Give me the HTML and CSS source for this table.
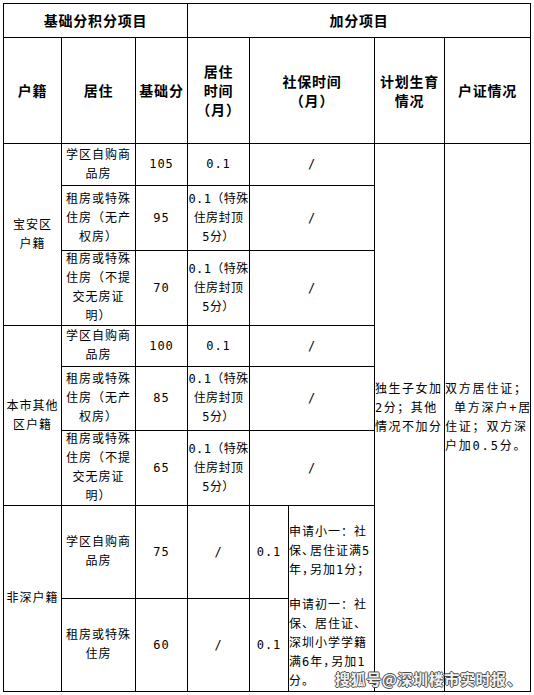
FILE: index.html
```html
<!DOCTYPE html>
<html lang="zh-CN">
<head>
<meta charset="utf-8">
<title>积分项目</title>
<link rel="stylesheet" href="styles.css">
</head>
<body>
<div class="page">
  <div class="sheet">
    <div class="cell head cs3"><span>基础分积分项目</span></div>
    <div class="cell head cs5"><span>加分项目</span></div>

    <div class="cell head"><span>户籍</span></div>
    <div class="cell head"><span>居住</span></div>
    <div class="cell head"><span>基础分</span></div>
    <div class="cell head"><span>居住<br>时间<br>（月）</span></div>
    <div class="cell head cs2"><span>社保时间<br>（月）</span></div>
    <div class="cell head"><span>计划生育<br>情况</span></div>
    <div class="cell head"><span>户证情况</span></div>

    <div class="cell rs3"><span>宝安区<br>户籍</span></div>
    <div class="cell"><span>学区自购商<br>品房</span></div>
    <div class="cell"><span>105</span></div>
    <div class="cell"><span>0.1</span></div>
    <div class="cell cs2"><span>/</span></div>
    <div class="cell rs8 plan"><span>独生子女加<br>2分；其他<br>情况不加分</span></div>
    <div class="cell rs8 hukou"><span>双方居住证；<br>&nbsp;单方深户+居<br>住证；双方深<br>户加0.5分。</span></div>

    <div class="cell"><span>租房或特殊<br>住房（无产<br>权房）</span></div>
    <div class="cell"><span>95</span></div>
    <div class="cell nar"><span>0.1（特殊<br>住房封顶<br>5分）</span></div>
    <div class="cell cs2"><span>/</span></div>

    <div class="cell"><span>租房或特殊<br>住房（不提<br>交无房证<br>明）</span></div>
    <div class="cell"><span>70</span></div>
    <div class="cell nar"><span>0.1（特殊<br>住房封顶<br>5分）</span></div>
    <div class="cell cs2"><span>/</span></div>

    <div class="cell rs3"><span>本市其他<br>区户籍</span></div>
    <div class="cell"><span>学区自购商<br>品房</span></div>
    <div class="cell"><span>100</span></div>
    <div class="cell"><span>0.1</span></div>
    <div class="cell cs2"><span>/</span></div>

    <div class="cell"><span>租房或特殊<br>住房（无产<br>权房）</span></div>
    <div class="cell"><span>85</span></div>
    <div class="cell nar"><span>0.1（特殊<br>住房封顶<br>5分）</span></div>
    <div class="cell cs2"><span>/</span></div>

    <div class="cell"><span>租房或特殊<br>住房（不提<br>交无房证<br>明）</span></div>
    <div class="cell"><span>65</span></div>
    <div class="cell nar"><span>0.1（特殊<br>住房封顶<br>5分）</span></div>
    <div class="cell cs2"><span>/</span></div>

    <div class="cell rs2"><span>非深户籍</span></div>
    <div class="cell"><span>学区自购商<br>品房</span></div>
    <div class="cell"><span>75</span></div>
    <div class="cell"><span>/</span></div>
    <div class="cell"><span>0.1</span></div>
    <div class="cell rs2 apply">
      <div class="para"><span>申请小一：社<br>保<span class="tight">、</span>居住证满5<br>年<span class="tight">，</span>另加1分；</span></div>
      <div class="para"><span>申请初一：社<br>保、居住证、<br>深圳小学学籍<br>满6年<span class="tight">，</span>另加1<br>分。</span></div>
    </div>

    <div class="cell"><span>租房或特殊<br>住房</span></div>
    <div class="cell"><span>60</span></div>
    <div class="cell"><span>/</span></div>
    <div class="cell"><span>0.1</span></div>
  </div>
  <div class="watermark">搜狐号@深圳楼市实时报、</div>
</div>
</body>
</html>
```

FILE: styles.css
```css
html, body {
  margin: 0;
  padding: 0;
  background: #ffffff;
}

body {
  padding: 3px 0 0 3px;
  font-family: "DejaVu Sans Mono", "Noto Sans CJK SC", sans-serif;
  font-size: 12px;
  color: #000000;
}

.page {
  position: relative;
  width: max-content;
}

.sheet {
  display: grid;
  grid-template-columns: 57px 73px 51px 61px 38px 85px 69px 85px;
  grid-template-rows: 33px 105px 41px 64px 74px 40px 63px 74px 92px 92px;
  gap: 1px;
  padding: 1px;
  background: #000000;
}

.cell {
  background: #ffffff;
  display: flex;
  align-items: center;
  justify-content: center;
  text-align: center;
  line-height: 19px;
  letter-spacing: 1px;
  white-space: nowrap;
}

.cell > span {
  display: block;
}

.head {
  font-family: "Noto Sans CJK SC", sans-serif;
  font-weight: bold;
  font-size: 14px;
  line-height: 19px;
  letter-spacing: 0.8px;
}

.nar {
  letter-spacing: 0.4px;
}

.cs2 { grid-column: span 2; }
.cs3 { grid-column: span 3; }
.cs5 { grid-column: span 5; }
.rs2 { grid-row: span 2; }
.rs3 { grid-row: span 3; }
.rs8 { grid-row: span 8; }

.plan {
  justify-content: flex-start;
  text-align: left;
  letter-spacing: 1.5px;
  padding-bottom: 19px;
}

.hukou {
  justify-content: flex-start;
  text-align: left;
  letter-spacing: 1.8px;
}

.apply {
  flex-direction: column;
  align-items: stretch;
  justify-content: stretch;
  text-align: left;
}

.para {
  flex: 1;
  display: flex;
  align-items: center;
}

.para > span {
  display: block;
}

.tight {
  letter-spacing: -4px;
}

.watermark {
  position: absolute;
  left: 332px;
  top: 667px;
  font-family: "Noto Sans CJK SC", sans-serif;
  font-weight: bold;
  font-size: 15px;
  line-height: 18px;
  color: #f2f2f2;
  letter-spacing: 0.6px;
  white-space: nowrap;
  text-shadow: 1px 0 0 #4a4a4a, -1px 0 0 #4a4a4a, 0 1px 0 #4a4a4a, 0 -1px 0 #4a4a4a;
}
```
